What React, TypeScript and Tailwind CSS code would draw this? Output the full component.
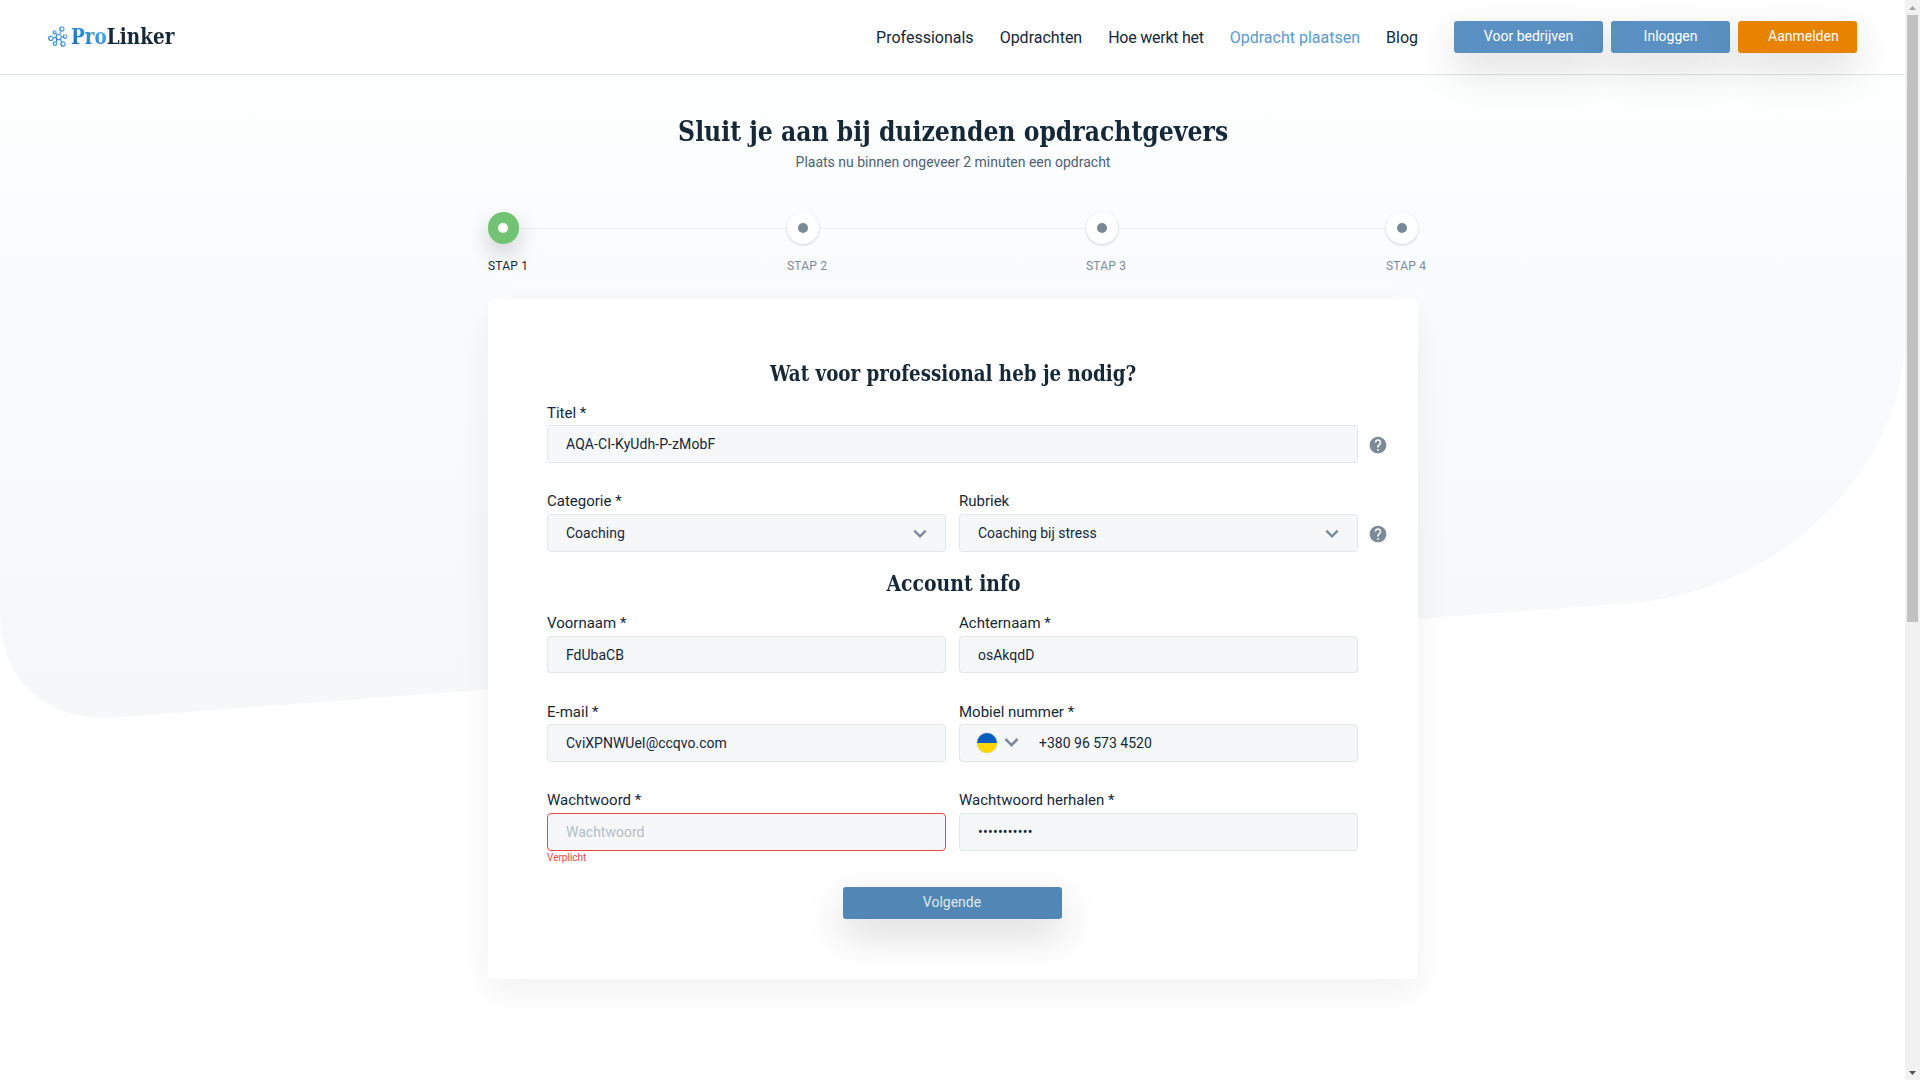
import type { ReactNode } from "react";
import { MdHelp } from "react-icons/md";

const SLAB = "font-['Roboto_Slab','DejaVu_Serif_Condensed','DejaVu_Serif',serif] font-bold";

function Chevron({ className = "" }: { className?: string }) {
  return (
    <svg viewBox="0 0 14 10" fill="none" stroke="#7b8b9a" strokeWidth="2.4" className={className}>
      <path d="M1.3 1.7 L7 7.4 L12.7 1.7" />
    </svg>
  );
}

function Logo() {
  return (
    <div className="flex w-[180px] items-center">
      <svg viewBox="0 0 20 21" className="-mt-px h-[21px] w-5 shrink-0" fill="none" strokeWidth="1.15">
        <defs>
          <linearGradient id="mark" x1="0" y1="1" x2="1" y2="0">
            <stop offset="0" stopColor="#1668c4" />
            <stop offset="1" stopColor="#5bb8f5" />
          </linearGradient>
        </defs>
        <g stroke="url(#mark)">
          <circle cx="10.7" cy="11.1" r="2.6" />
          <circle cx="13.9" cy="2.9" r="2.1" />
          <circle cx="6.6" cy="6.2" r="1.5" />
          <circle cx="17.1" cy="10.5" r="1.8" />
          <circle cx="2.9" cy="12.3" r="2.2" />
          <circle cx="7" cy="17.6" r="1.8" />
          <circle cx="15" cy="18" r="2.1" />
          <path d="M11.6 8.7 L13.1 4.9 M9 9.1 L7.6 7.4 M13.3 10.9 L15.3 10.7 M5.1 12 L8.1 11.5 M8 16.1 L9.3 13.3 M12.1 13.3 L13.8 16.3" />
        </g>
      </svg>
      <div className={`${SLAB} mb-0.5 ml-[3px] origin-left scale-x-[0.93] text-[22px] leading-8 whitespace-nowrap text-[#152838]`}>
        <span className="bg-linear-to-tr from-[#1063be] via-[#2f8fdd] to-[#5cbcf6] bg-clip-text text-transparent">Pro</span>
        <span>Linker</span>
      </div>
    </div>
  );
}

const NAV = [
  { text: "Professionals", style: "" },
  { text: "Opdrachten", style: "" },
  { text: "Hoe werkt het", style: "tracking-[-0.25px]" },
  { text: "Opdracht plaatsen", style: "text-[#5a9bd0]" },
  { text: "Blog", style: "" },
];

function Header() {
  return (
    <header className="flex h-[75px] items-center justify-between border-b border-[#dfe5e8] bg-white pr-12 pl-12">
      <Logo />
      <div className="flex items-center">
        <nav className="flex gap-[26px] pt-px pr-9 text-base leading-6 text-[#152838]">
          {NAV.map((n) => (
            <a key={n.text} className={n.style}>
              {n.text}
            </a>
          ))}
        </nav>
        <div className="flex gap-2 text-sm text-white">
          <a className="flex h-8 w-[149px] items-center justify-center rounded-[3px] bg-[#5a91c2] pb-0.5 shadow-[0_15px_40px_rgba(0,0,0,0.15)]">
            Voor bedrijven
          </a>
          <a className="flex h-8 w-[119px] items-center justify-center rounded-[3px] bg-[#5a91c2] pb-0.5 shadow-[0_15px_40px_rgba(0,0,0,0.15)]">
            Inloggen
          </a>
          <a className="flex h-8 w-[119px] items-center rounded-[3px] bg-[#e88300] pb-0.5 pl-[30px] shadow-[0_15px_40px_rgba(0,0,0,0.15)]">
            Aanmelden
          </a>
        </div>
      </div>
    </header>
  );
}

function Steps() {
  return (
    <div className="relative mt-9 flex h-[69px] w-[930px]">
      <div className="absolute top-4 right-4 left-4 h-px bg-[#eceff0]" />
      {[1, 2, 3, 4].map((n) => (
        <div key={n} className={n === 4 ? "relative w-[33px] shrink-0" : "relative w-[299px] shrink-0"}>
          {n === 1 ? (
            <div className="flex h-8 w-[31px] items-center justify-center rounded-full bg-[#74c374] pr-px shadow-[0_10px_24px_rgba(0,0,0,0.2)]">
              <div className="size-2.5 rounded-full bg-white" />
            </div>
          ) : (
            <div className={n === 4 ? "ml-px size-8" : "size-8"}>
              <div className="flex size-8 items-center justify-center rounded-full bg-white shadow-[0_1px_3px_rgba(0,0,0,0.18)]">
                <div className="size-2.5 rounded-full bg-[#788997]" />
              </div>
            </div>
          )}
          <div
            className={
              n === 1
                ? "mt-3.5 pl-[0.5px] text-xs leading-4 tracking-[0.2px] whitespace-nowrap text-[#152838]"
                : n === 4
                  ? "mt-3.5 pl-[1.5px] text-xs leading-4 tracking-[0.2px] whitespace-nowrap text-[#7b8b9a]"
                  : "mt-3.5 pl-[0.5px] text-xs leading-4 tracking-[0.2px] whitespace-nowrap text-[#7b8b9a]"
            }
          >
            STAP {n}
          </div>
        </div>
      ))}
    </div>
  );
}

type FieldProps = { label: string; children: ReactNode; error?: boolean; short?: boolean; raised?: boolean };

function Field({ label, children, error, short, raised }: FieldProps) {
  const base = "flex items-center rounded border bg-[#f5f7f9] pr-[18px] pl-[18.5px] text-sm ";
  const height = short ? "h-[37px] " : "h-[38px] ";
  return (
    <label className="block flex-1">
      <span
        className={
          raised
            ? "block h-[23px] pl-[0.5px] text-[15px] leading-5"
            : "block h-[23px] pl-[0.5px] text-[15px] leading-[22px]"
        }
      >
        {label}
      </span>
      <div className={base + height + (error ? "border-[#e84a42]" : "border-[#e1e6eb]")}>{children}</div>
    </label>
  );
}

function Help() {
  return <MdHelp className="mt-[33px] ml-[10px] size-5 shrink-0 text-[#7b8b9a]" />;
}

function Select({ value }: { value: string }) {
  return (
    <>
      <span className="flex-1">{value}</span>
      <Chevron className="mt-px h-2.5 w-3.5" />
    </>
  );
}

function Flag() {
  return (
    <div className="-ml-[1.5px] size-5 shrink-0 overflow-hidden rounded-full shadow-[0_0_1px_rgba(0,0,0,0.4)]">
      <div className="h-1/2 bg-[#0a5ebc]" />
      <div className="h-1/2 bg-[#ffd500]" />
    </div>
  );
}

export default function App() {
  return (
    <div className="flex h-[1080px] w-[1920px] overflow-hidden bg-white font-['Roboto',sans-serif] text-[#152838]">
      <div className="relative h-full w-[1905px] overflow-hidden">
        <svg className="absolute inset-0 h-[1080px] w-[1905px]" viewBox="0 0 1905 1080">
          <defs>
            <linearGradient id="backdrop" x1="0" y1="75" x2="0" y2="718" gradientUnits="userSpaceOnUse">
              <stop offset="0" stopColor="#fdfffe" />
              <stop offset="0.15" stopColor="#fcfdfe" />
              <stop offset="0.5" stopColor="#f9fafc" />
              <stop offset="1" stopColor="#f5f7f9" />
            </linearGradient>
          </defs>
          <path d="M0 75 H1905 V345 C1898 475 1778 591 1633 602.7 L115 717.5 C45 722 0 680 0 612 Z" fill="url(#backdrop)" />
        </svg>
        <div className="relative flex flex-col">
          <Header />
          <main className="flex flex-col items-center">
            <h1 className={`${SLAB} mt-[37px] ml-0.5 scale-x-[0.935] text-[28px] leading-10 whitespace-nowrap`}>
              Sluit je aan bij duizenden opdrachtgevers
            </h1>
            <p className="mt-px ml-px h-[23px] text-sm leading-[19px] text-[#4d6275]">
              Plaats nu binnen ongeveer 2 minuten een opdracht
            </p>
            <Steps />
            <section className="mt-[18px] h-[680px] w-[930px] rounded-md bg-white pt-[58px] pl-[59px] shadow-[0_12px_35px_rgba(0,0,0,0.06)]">
              <h2 className={`${SLAB} mb-[13px] flex w-[811px] justify-center pl-0.5 text-[22px] leading-8`}>
                <span className="scale-x-[0.924] whitespace-nowrap">Wat voor professional heb je nodig?</span>
              </h2>
              <div className="flex">
                <div className="flex w-[811px]">
                  <Field label="Titel *">
                    <span className="tracking-[0.08px]">AQA-CI-KyUdh-P-zMobF</span>
                  </Field>
                </div>
                <Help />
              </div>
              <div className="mt-7 flex">
                <div className="flex w-[811px] gap-[13px]">
                  <Field label="Categorie *" raised>
                    <Select value="Coaching" />
                  </Field>
                  <Field label="Rubriek" raised>
                    <Select value="Coaching bij stress" />
                  </Field>
                </div>
                <Help />
              </div>
              <h2 className={`${SLAB} mt-[15px] mb-3.5 flex w-[811px] justify-center pl-[3px] text-[22px] leading-8`}>
                <span className="scale-x-[0.95]">Account info</span>
              </h2>
              <div className="flex w-[811px] gap-[13px]">
                <Field label="Voornaam *" short raised>
                  FdUbaCB
                </Field>
                <Field label="Achternaam *" short raised>
                  osAkqdD
                </Field>
              </div>
              <div className="mt-7 flex w-[811px] gap-[13px]">
                <Field label="E-mail *">CviXPNWUeI@ccqvo.com</Field>
                <Field label="Mobiel nummer *">
                  <Flag />
                  <Chevron className="mr-5 mb-0.5 ml-[7.5px] h-[11px] w-[15px]" />
                  +380 96 573 4520
                </Field>
              </div>
              <div className="mt-7 flex w-[811px] gap-[13px]">
                <Field label="Wachtwoord *" error raised>
                  <span className="text-[#b5bdc5]">Wachtwoord</span>
                </Field>
                <Field label="Wachtwoord herhalen *" raised>
                  <span className="tracking-[0.25px]">•••••••••••</span>
                </Field>
              </div>
              <p className="mt-px pl-[0.5px] text-[10px] leading-3 text-[#e84a42]">Verplicht</p>
              <div className="mt-[23px] flex w-[811px] justify-center">
                <button className="h-8 w-[219px] rounded-[3px] bg-[#5286b4] pb-0.5 text-sm text-[#dfe8f1] shadow-[0_15px_40px_rgba(0,0,0,0.16)]">
                  Volgende
                </button>
              </div>
            </section>
          </main>
        </div>
      </div>
      <div className="flex h-full w-[15px] flex-col items-center bg-[#f1f1f1]">
        <div className="flex h-[15px] items-center">
          <svg viewBox="0 0 7 4" className="h-1 w-[7px]">
            <path d="M0 4 L3.5 0 L7 4 Z" fill="#a3a3a3" />
          </svg>
        </div>
        <div className="h-[607px] w-[11px] bg-[#c1c1c1]" />
        <div className="mt-auto flex h-[15px] items-center">
          <svg viewBox="0 0 7 4" className="h-1 w-[7px]">
            <path d="M0 0 L3.5 4 L7 0 Z" fill="#505050" />
          </svg>
        </div>
      </div>
    </div>
  );
}
